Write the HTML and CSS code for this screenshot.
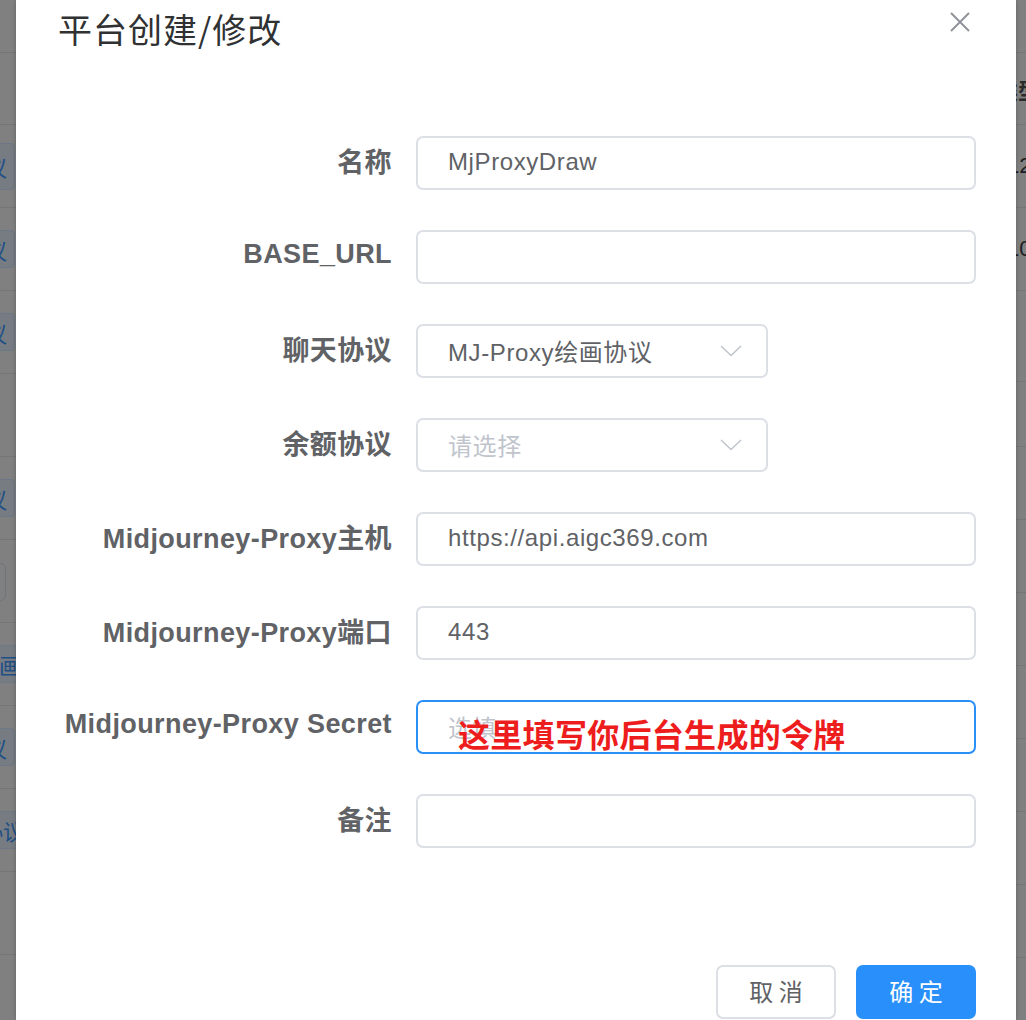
FILE: index.html
```html
<!DOCTYPE html>
<html lang="zh-CN">
<head>
<meta charset="utf-8">
<title>平台创建/修改</title>
<link rel="stylesheet" href="styles.css">
</head>
<body>
<div class="page">
  <div class="strip strip-left">
    <div class="row row-top"></div>
    <div class="row row-head"></div>
    <div class="row"><span class="tag tag-tall">协议</span></div>
    <div class="row"><span class="tag">协议</span></div>
    <div class="row"><span class="tag">协议</span></div>
    <div class="row"></div>
    <div class="row"><span class="tag">协议</span></div>
    <div class="row"><span class="box"></span></div>
    <div class="row"><span class="tag tag-wide">绘画</span></div>
    <div class="row"><span class="tag">协议</span></div>
    <div class="row"><span class="tag tag-wide2">协议</span></div>
    <div class="row"></div>
    <div class="row"></div>
  </div>

  <div class="dialog">
    <div class="dialog-header">
      <span class="dialog-title">平台创建/修改</span>
      <button class="dialog-close" aria-label="关闭">
        <svg width="20" height="20" viewBox="0 0 20 20"><path d="M1 1 L19 19 M19 1 L1 19" stroke="#909399" stroke-width="2" fill="none"/></svg>
      </button>
    </div>

    <form class="form">
      <div class="form-item">
        <label class="form-label">名称</label>
        <div class="input"><span class="value">MjProxyDraw</span></div>
      </div>
      <div class="form-item">
        <label class="form-label">BASE_URL</label>
        <div class="input"></div>
      </div>
      <div class="form-item">
        <label class="form-label">聊天协议</label>
        <div class="input select"><span class="value">MJ-Proxy绘画协议</span>
          <svg class="chevron" width="22" height="12" viewBox="0 0 22 12"><polyline points="1,1 11,10.5 21,1" fill="none" stroke="#c0c4cc" stroke-width="1.5"/></svg>
        </div>
      </div>
      <div class="form-item">
        <label class="form-label">余额协议</label>
        <div class="input select"><span class="placeholder">请选择</span>
          <svg class="chevron" width="22" height="12" viewBox="0 0 22 12"><polyline points="1,1 11,10.5 21,1" fill="none" stroke="#c0c4cc" stroke-width="1.5"/></svg>
        </div>
      </div>
      <div class="form-item">
        <label class="form-label">Midjourney-Proxy主机</label>
        <div class="input"><span class="value">https://api.aigc369.com</span></div>
      </div>
      <div class="form-item">
        <label class="form-label">Midjourney-Proxy端口</label>
        <div class="input"><span class="value">443</span></div>
      </div>
      <div class="form-item">
        <label class="form-label">Midjourney-Proxy Secret</label>
        <div class="input focused"><span class="placeholder">选填</span>
          <span class="note">这里填写你后台生成的令牌</span>
        </div>
      </div>
      <div class="form-item">
        <label class="form-label">备注</label>
        <div class="input"></div>
      </div>
    </form>

    <div class="dialog-footer">
      <button class="btn">取 消</button>
      <button class="btn btn-primary">确 定</button>
    </div>
  </div>

  <div class="strip strip-right">
    <div class="row row-top"></div>
    <div class="row row-head"><span class="cell cell-bold">类型</span></div>
    <div class="row"><span class="cell">12</span></div>
    <div class="row"><span class="cell">10</span></div>
    <div class="row r91"></div>
    <div class="row r65"></div>
    <div class="row r73"></div>
    <div class="row r73"></div>
    <div class="row r73"></div>
    <div class="row r73"></div>
    <div class="row r73"></div>
    <div class="row r73"></div>
    <div class="row r73"></div>
    <div class="row r73"></div>
  </div>
</div>
</body>
</html>
```

FILE: styles.css
```css
* { box-sizing: border-box; }

html, body {
  margin: 0;
  padding: 0;
  background: #808080;
}

body {
  font-family: "Liberation Sans", "Noto Sans CJK SC", sans-serif;
}

.page {
  display: flex;
  width: 1026px;
  height: 1020px;
  overflow: hidden;
}

/* background page under the mask */
.strip {
  display: flex;
  flex-direction: column;
  background: #808080;
  overflow: hidden;
  flex: none;
}
.strip-left { width: 16px; }
.strip-right { width: 10px; }

.strip .row {
  flex: none;
  height: 83px;
  border-bottom: 1px solid #74777a;
  display: flex;
  align-items: center;
}
.strip-left .row { justify-content: flex-end; }
.strip .row-top { height: 53px; }
.strip .row-head { height: 72px; }
.strip .r91 { height: 91px; }
.strip .r65 { height: 65px; }
.strip .r73 { height: 73px; }

.tag {
  flex: none;
  display: inline-flex;
  align-items: center;
  height: 38px;
  padding: 0 7px 0 12px;
  margin-right: 1px;
  background: #777c83;
  border: 1px solid #6c7886;
  border-radius: 4px;
  color: #1f4f86;
  font-family: "Noto Sans CJK SC", sans-serif;
  font-size: 22px;
}
.tag-tall { height: 47px; }
.tag-wide { padding-right: 0; margin-right: -6px; }
.tag-wide2 { padding-right: 0; margin-right: -10px; }

.box {
  flex: none;
  width: 60px;
  height: 38px;
  margin-right: 10px;
  border: 1px solid #6f747b;
  border-radius: 6px;
  margin-top: 2px;
}

.cell {
  flex: none;
  margin-left: -9px;
  color: #1d1d1f;
  font-size: 22px;
  font-family: "Liberation Sans", "Noto Sans CJK SC", sans-serif;
}
.cell-bold { font-weight: bold; font-family: "Noto Sans CJK SC", sans-serif; margin-left: -20px; color: #2a2a2c; }

/* dialog */
.dialog {
  position: relative;
  flex: none;
  width: 1000px;
  background: #ffffff;
  box-shadow: 0 0 4px rgba(0, 0, 0, 0.25);
}

.dialog-header {
  padding: 9px 0 0 42px;
  height: 49px;
}
.dialog-title {
  font-family: "Noto Sans CJK SC", sans-serif;
  font-size: 34px;
  line-height: 40px;
  color: #303133;
  letter-spacing: 1px;
}
.dialog-close {
  position: absolute;
  top: 12px;
  right: 46px;
  width: 20px;
  height: 20px;
  padding: 0;
  border: 0;
  background: transparent;
  display: block;
}
.dialog-close svg { display: block; }

.form {
  padding-top: 87px;
  margin: 0;
}
.form-item {
  display: flex;
  align-items: center;
  height: 54px;
  margin-bottom: 40px;
}
.form-item:last-child { margin-bottom: 0; }

.form-label {
  flex: none;
  width: 400px;
  padding-right: 24px;
  padding-bottom: 5px;
  text-align: right;
  font-size: 27px;
  font-weight: bold;
  color: #606266;
  letter-spacing: 0.4px;
  white-space: nowrap;
  font-family: "Liberation Sans", "Noto Sans CJK SC", sans-serif;
}

.input {
  position: relative;
  flex: none;
  width: 560px;
  height: 54px;
  border: 2px solid #dcdfe6;
  border-radius: 7px;
  padding-left: 30px;
  padding-bottom: 2px;
  display: flex;
  align-items: center;
  font-size: 24px;
  letter-spacing: 0.6px;
}
.input.select { width: 352px; }
.input.focused { border-color: #2b8ff8; }

.value { color: #606266; white-space: nowrap; }
.placeholder { color: #c0c4cc; white-space: nowrap; font-family: "Noto Sans CJK SC", sans-serif; }

.chevron {
  position: absolute;
  right: 24px;
  top: 19px;
}

.note {
  position: absolute;
  left: 40px;
  top: 13px;
  font-family: "Noto Sans CJK SC", sans-serif;
  font-size: 32px;
  line-height: 36px;
  font-weight: bold;
  color: #ee1d1d;
  letter-spacing: 0.3px;
  white-space: nowrap;
}

.dialog-footer {
  display: flex;
  justify-content: flex-end;
  gap: 20px;
  padding-right: 40px;
  margin-top: 117px;
}

.btn {
  width: 120px;
  height: 54px;
  border: 2px solid #dcdfe6;
  border-radius: 7px;
  background: #ffffff;
  color: #606266;
  font-family: "Noto Sans CJK SC", sans-serif;
  font-size: 24px;
  padding: 0 0 3px;
}
.btn-primary {
  background: #2990fb;
  border-color: #2990fb;
  color: #ffffff;
}
```
